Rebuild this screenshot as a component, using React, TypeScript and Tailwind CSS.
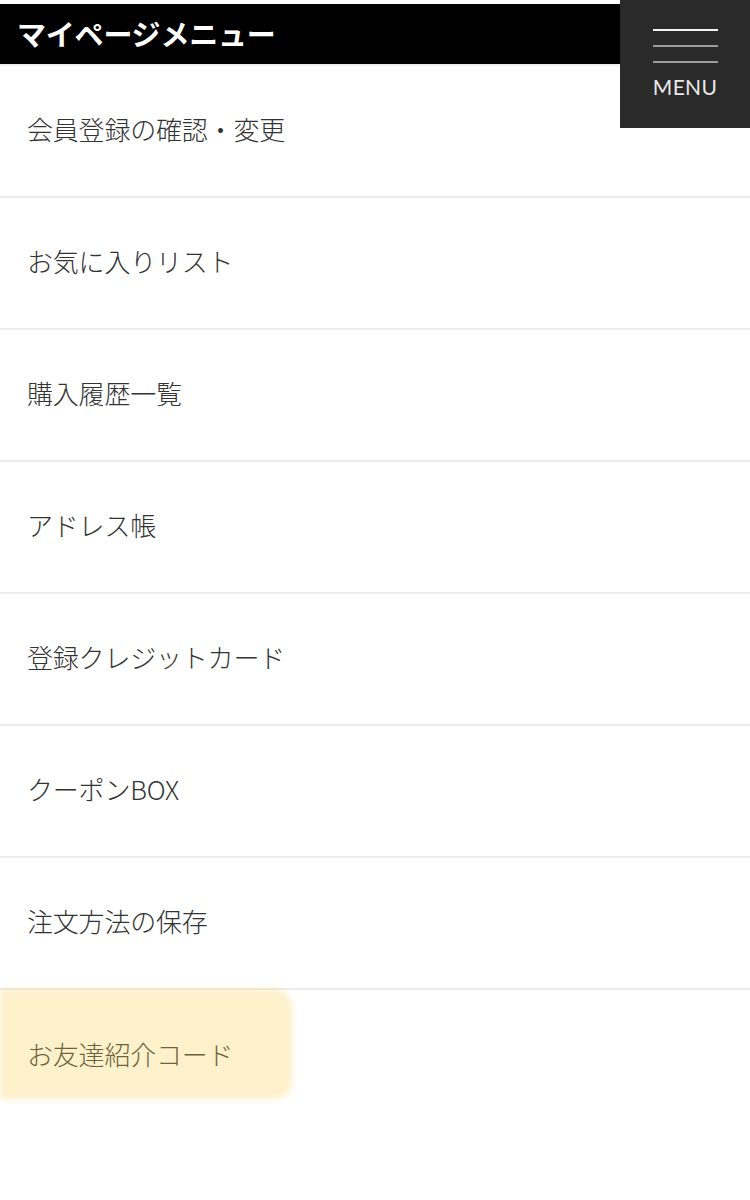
import React from "react";

const items = [
  "会員登録の確認・変更",
  "お気に入りリスト",
  "購入履歴一覧",
  "アドレス帳",
  "登録クレジットカード",
  "クーポンBOX",
  "注文方法の保存",
  "お友達紹介コード",
];

export default function App() {
  return (
    <div
      className="relative w-[750px] min-h-[1200px] bg-white"
      style={{ fontFamily: '"Noto Sans CJK JP", "Noto Sans", sans-serif' }}
    >
      <div className="pt-[4px]">
        <div className="h-[60px] bg-black flex items-center pl-[17px] pb-[2px]">
          <span className="text-white text-[29px] font-bold leading-none tracking-[-0.2px]">
            マイページメニュー
          </span>
        </div>
        <div className="h-[2px] bg-[#efefef]" />
      </div>
      <ul>
        {items.map((t, i) => {
          const last = i === items.length - 1;
          return (
            <li
              key={t}
              className={
                "relative h-[132px] flex items-center pl-[27px] pb-[4px] " +
                (last ? "" : "border-b-2 border-[#ececec]")
              }
            >
              <span className="relative text-[26px] font-light text-[#333333] leading-none tracking-[-0.2px]">
                {t}
              </span>
              {last && (
                <div className="absolute left-0 top-[-1px] w-[292px] h-[110px] rounded-r-[18px] bg-[rgba(246,210,80,0.3)] blur-[3px]" />
              )}
            </li>
          );
        })}
      </ul>
      <div className="absolute top-0 right-0 w-[130px] h-[128px] bg-[#2a2a2a] flex flex-col items-center">
        <div className="mt-[29px] w-[65px] h-[2px] bg-[#f2f2f2]" />
        <div className="mt-[14px] w-[65px] h-[2px] bg-[#9c9c9c]" />
        <div className="mt-[14px] w-[65px] h-[2px] bg-[#9c9c9c]" />
        <span
          className="mt-[13px] text-[21px] text-[#e8e8e8] leading-none tracking-[0.3px]"
          style={{ fontFamily: 'Lato, "Open Sans", sans-serif' }}
        >
          MENU
        </span>
      </div>
    </div>
  );
}
